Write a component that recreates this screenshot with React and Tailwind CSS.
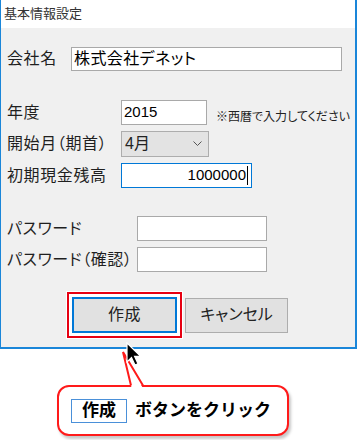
const font = "font-['Liberation_Sans','Noto_Sans_CJK_JP',sans-serif]";

// Windows-style text field
const Field = ({ w, h = 25, children, focused, right, className = "" }) => (
  <div
    className={`flex items-center bg-white text-[15px] text-black ${
      focused ? "border border-[#0078d7]" : "border border-[#a9a9a9]"
    } ${right ? "justify-end pr-[3px]" : "pl-[2px]"} ${className}`}
    style={{ width: w, height: h }}
  >
    {children}
  </div>
);

const Row = ({ label, labelW, className = "", children }) => (
  <div className={`flex items-center ${className}`}>
    <div
      className="text-[16px] tracking-[0.6px] leading-none text-[#1f1f1f] [font-feature-settings:'palt']"
      style={{ width: labelW }}
    >
      {label}
    </div>
    {children}
  </div>
);

export default function App() {
  return (
    <div className={`relative w-[358px] h-[440px] overflow-hidden bg-white ${font}`}>
      {/* dialog window */}
      <div className="w-[357px] h-[349px] flex flex-col border-l border-r-2 border-b-2 border-[#1a86d9]">
        <div className="h-[28px] flex items-center pl-[3px] bg-white text-[13px] text-[#333] [font-feature-settings:'palt']">
          基本情報設定
        </div>
        <div className="flex-1 bg-[#f0f0f0] pl-[6px] pt-[19px]">
          <Row label="会社名" labelW={64}>
            <Field w={271} h={24} className="text-[16px] tracking-[0.4px] [font-feature-settings:'palt']">
              株式会社デネット
            </Field>
          </Row>

          <Row label="年度" labelW={114} className="mt-[29px]">
            <Field w={86}>2015</Field>
            <span className="self-end ml-[9px] mb-[1px] text-[12px] leading-[14px] text-[#222] [font-feature-settings:'palt']">
              ※西暦で入力してください
            </span>
          </Row>

          <Row label="開始月（期首）" labelW={114} className="mt-[6px]">
            <div className="w-[88px] h-[26px] flex items-center justify-between pl-[3px] pr-[6px] bg-[#e3e3e3] border border-[#adadad] text-[16px] text-[#222]">
              <span>4月</span>
              <svg width="9" height="6" viewBox="0 0 9 6">
                <polyline points="0.5,0.5 4.5,4.5 8.5,0.5" fill="none" stroke="#555" strokeWidth="1" />
              </svg>
            </div>
          </Row>

          <Row label="初期現金残高" labelW={114} className="mt-[6px]">
            <Field w={131} focused right>
              <span>1000000</span>
              <span className="w-px h-[19px] bg-black ml-px" />
            </Field>
          </Row>

          <Row label="パスワード" labelW={130} className="mt-[28px]">
            <Field w={130} />
          </Row>

          <Row label="パスワード（確認）" labelW={130} className="mt-[6px]">
            <Field w={130} />
          </Row>

          {/* buttons */}
          <div className="flex items-center mt-[20px] pl-[60px]">
            <div className="p-[3px] border-2 border-[#e60012] bg-white shadow-[0_0_0_1px_#fff]">
              <div className="w-[105px] h-[36px] flex items-center justify-center bg-[#e1e1e1] border-2 border-[#0078d7] text-[16px] tracking-[0.5px] text-[#222]">
                作成
              </div>
            </div>
            <div className="ml-[3px] w-[103px] h-[35px] flex items-center justify-center bg-[#e1e1e1] border border-[#adadad] text-[16px] text-[#222] [font-feature-settings:'palt']">
              キャンセル
            </div>
          </div>
        </div>
      </div>

      {/* callout */}
      <div className="ml-[57px] mt-[36px] w-[232px] h-[51px] flex items-center pl-[12px] bg-white border-2 border-[#ff1a1a] rounded-[12px] shadow-[2px_3px_3px_rgba(0,0,0,0.22)]">
        <div className="w-[56px] h-[24px] flex items-center justify-center border border-[#4a90d9] text-[17px] font-bold text-black">
          作成
        </div>
        <span className="ml-[8px] text-[17px] font-bold text-black">
          ボタンをクリック
        </span>
      </div>

      {/* callout tail */}
      <svg className="absolute left-[118px] top-[349px]" width="30" height="40" viewBox="0 0 30 40">
        <polygon points="13.5,38.5 5,3 24.5,38.5" fill="#fff" />
        <polyline points="13,36.5 5,3 25,36.5" fill="none" stroke="#ff1a1a" strokeWidth="2" />
      </svg>

      {/* mouse cursor */}
      <svg className="absolute left-[126px] top-[342px]" width="18" height="26" viewBox="0 0 18 26">
        <path
          d="M1 1 L1 20 L5.5 15.5 L9 23 L12 21.7 L8.6 14.4 L14.6 14.4 Z"
          fill="#000"
          stroke="#fff"
          strokeWidth="1.2"
          strokeLinejoin="miter"
        />
      </svg>
    </div>
  );
}
